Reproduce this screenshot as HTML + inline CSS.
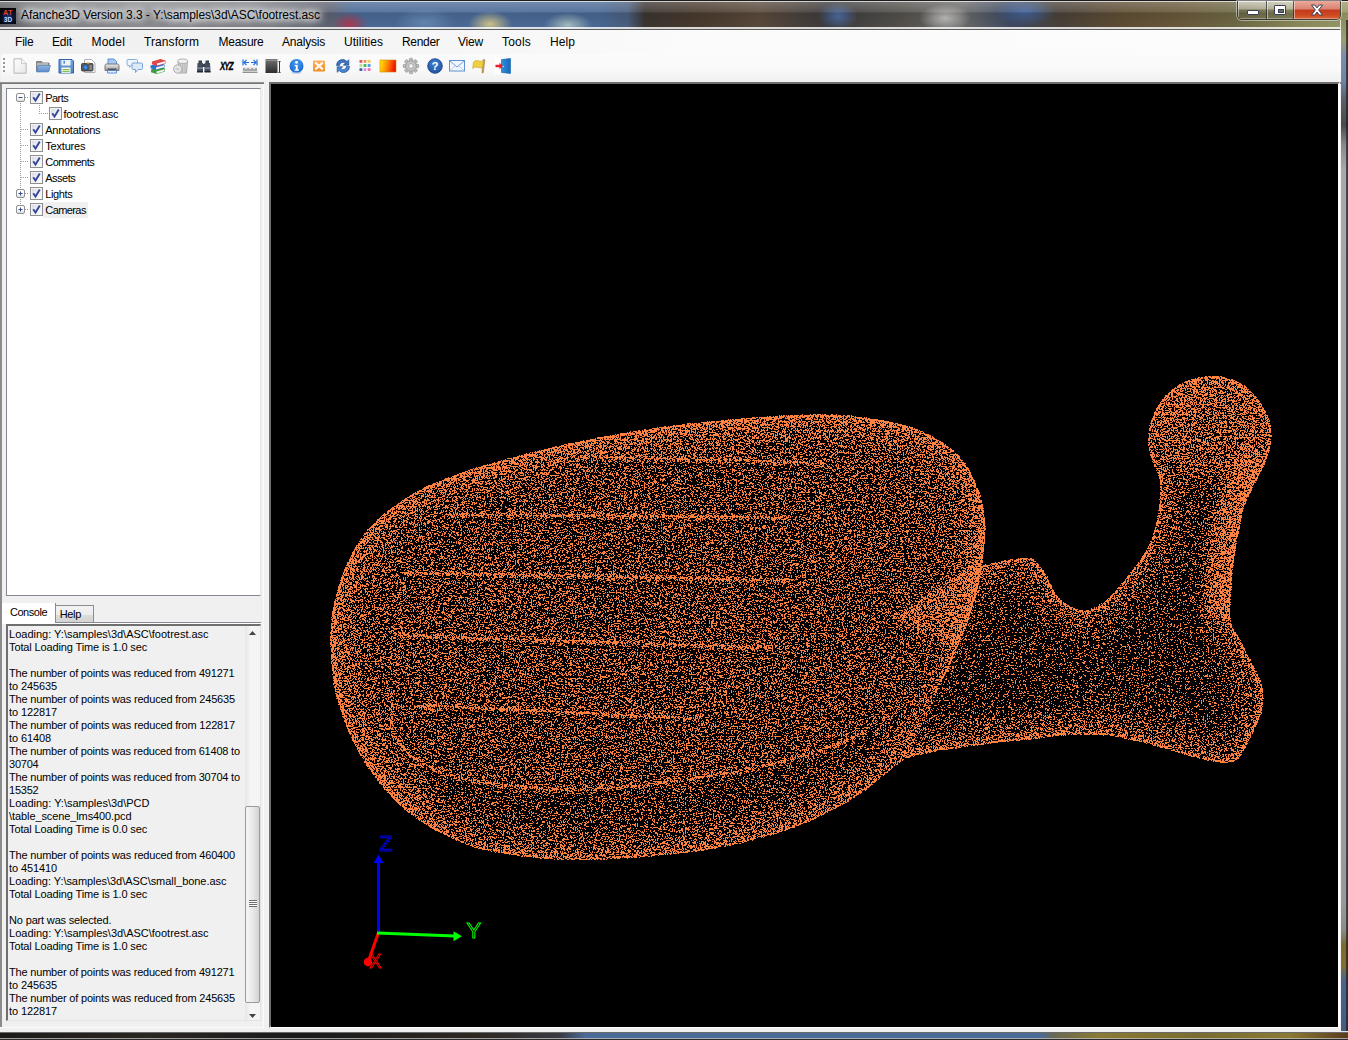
<!DOCTYPE html>
<html lang="en">
<head>
<meta charset="utf-8">
<title>Afanche3D Version 3.3</title>
<style>
*{box-sizing:border-box;margin:0;padding:0}
html,body{width:1348px;height:1040px;overflow:hidden;background:#000}
body{font-family:"Liberation Sans",sans-serif;color:#000}
#win{position:absolute;left:0;top:0;width:1348px;height:1040px;overflow:hidden;background:#6b6d70}
.abs{position:absolute}
#glass{left:0;top:0;width:1348px;height:30px;
 background:
 radial-gradient(ellipse 18px 12px at 350px 24px,rgba(190,50,70,.85),rgba(190,50,70,0) 100%),
 radial-gradient(ellipse 30px 14px at 425px 22px,rgba(120,160,200,.6),rgba(120,160,200,0) 100%),
 radial-gradient(ellipse 22px 13px at 490px 24px,rgba(235,215,140,.85),rgba(235,215,140,0) 100%),
 radial-gradient(ellipse 24px 12px at 568px 25px,rgba(200,220,210,.75),rgba(200,220,210,0) 100%),
 radial-gradient(ellipse 20px 14px at 838px 16px,rgba(80,120,190,.8),rgba(80,120,190,0) 100%),
 radial-gradient(ellipse 26px 14px at 945px 18px,rgba(215,215,215,.8),rgba(215,215,215,0) 100%),
 radial-gradient(ellipse 30px 14px at 1025px 12px,rgba(70,110,180,.75),rgba(70,110,180,0) 100%),
 linear-gradient(90deg,#5d5f63 0,#7b7d81 40px,#8b8d91 150px,#7d7f85 260px,#6c707a 300px,#5f6372 330px,#4b6a97 352px,#4c6b98 470px,#4a6995 600px,#4b5f7f 628px,#3b3531 645px,#4a3b2e 700px,#5a4a3c 760px,#3c3a3c 830px,#54514c 900px,#6d6c6a 960px,#3e4a63 1010px,#4a4238 1060px,#5f4e35 1120px,#6a5a3c 1180px,#6f6a45 1235px,#8d8c5c 1300px,#9a9a6a 1348px)}
#glassshade{left:0;top:0;width:1348px;height:30px;
 background:linear-gradient(180deg,#1d1d1d 0,#1d1d1d 1px,rgba(255,255,255,.75) 1px,rgba(255,255,255,.75) 2px,rgba(255,255,255,.22) 2px,rgba(255,255,255,.08) 12px,rgba(0,0,0,.10) 13px,rgba(0,0,0,.02) 27px,rgba(255,255,255,.8) 27.5px,rgba(255,255,255,.8) 28.7px,#5c5c5c 28.7px,#5c5c5c 30px)}
#appicon{left:0;top:8px;width:16px;height:16px;background:radial-gradient(circle at 50% 60%,#1b3f8a 0,#08122e 45%,#000 80%);overflow:hidden}
#appicon span{position:absolute;left:0;width:16px;text-align:center;font-weight:bold;font-size:7px;line-height:7px}
#appicon .a1{top:1px;color:#e8401c;letter-spacing:.5px}
#appicon .a2{top:8px;color:#c8d8ff;font-size:6.5px}
#title{left:21px;top:8px;font-size:12px;line-height:15px;white-space:nowrap;color:#000;letter-spacing:-0.055px;
 text-shadow:0 0 6px #fff,0 0 8px #fff,0 0 10px #fff,0 0 12px rgba(255,255,255,.9)}
#capbtns{left:1237px;top:1px;width:104px;height:19px;border:1px solid rgba(40,40,40,.75);border-top:none;border-radius:0 0 5px 5px;box-shadow:0 0 0 1px rgba(255,255,255,.45);overflow:hidden;display:flex}
.cb{height:18px;position:relative;border-right:1px solid rgba(40,40,40,.7);box-shadow:inset 1px 0 0 rgba(255,255,255,.45),inset 0 -1px 0 rgba(255,255,255,.3)}
.cmin{width:29px;background:linear-gradient(180deg,rgba(255,255,255,.55) 0,rgba(255,255,255,.3) 45%,rgba(60,60,50,.25) 50%,rgba(120,120,100,.2) 100%)}
.cmax{width:27px;background:linear-gradient(180deg,rgba(255,255,255,.55) 0,rgba(255,255,255,.3) 45%,rgba(60,60,50,.25) 50%,rgba(120,120,100,.2) 100%)}
.cclose{width:46px;border-right:none;background:linear-gradient(180deg,#e9a99b 0,#d98370 45%,#c4391c 50%,#cf4a22 80%,#d9683c 100%)}
.cmin i{position:absolute;left:9px;top:9px;width:12px;height:5px;background:#fff;border:1px solid #3a3f55;border-radius:1px}
.cmax i{position:absolute;left:7px;top:4px;width:12px;height:10px;border:1px solid #3a3f55;background:#fff;border-radius:1px;box-shadow:inset 0 0 0 3px #fff}
.cmax i:after{content:"";position:absolute;left:3px;top:3px;width:4px;height:2px;background:#6b6f60;border:1px solid #3a3f55}
.cclose svg{position:absolute;left:16px;top:3px}
#frameR{left:1340px;top:20px;width:8px;height:1020px;background:linear-gradient(90deg,rgba(255,255,255,.75) 0,rgba(255,255,255,.75) 1.5px,rgba(255,255,255,0) 1.5px,rgba(255,255,255,0) 6px,rgba(30,30,30,.7) 6.5px,rgba(30,30,30,.8) 8px),linear-gradient(180deg,#8b8d62 0,#9c9e74 20px,#7f8ea8 35px,#6f86a8 60px,#5a5f68 80px,#4a4a4c 105px,#8a8a8c 125px,#a9a9ab 150px,#a2a2a4 500px,#9a9a9c 880px,#8c8c8c 910px,#7a6a30 925px,#83702e 945px,#4c648c 960px,#43597f 1020px)}
#frameB{left:0;top:1031px;width:1348px;height:9px;background:linear-gradient(180deg,#e2e2e2 0,#e2e2e2 1px,#6a6a6a 1px,#6a6a6a 2px,rgba(0,0,0,0) 2px,rgba(0,0,0,0) 7px,rgba(190,190,190,.8) 7px,rgba(190,190,190,.8) 8px,#2a2a2a 8px),linear-gradient(90deg,#1c1a18 0,#2a2622 150px,#1a1a1c 300px,#2e2820 480px,#3a3a44 560px,#4a6a97 585px,#4b6b98 1040px,#6a6a50 1055px,#8a7a34 1100px,#7a6c30 1200px,#8a7a34 1290px,#5a3a1a 1348px)}
#client{left:0;top:30px;width:1341px;height:1002px;background:#f0f0f0}
#menubar{left:0;top:30px;width:1341px;height:24px;background:linear-gradient(90deg,#f0f0f0 0,#f3f3f3 300px,#fbfbfb 700px,#fcfcfc 1341px)}
.mi{position:absolute;top:35px;font-size:12px;line-height:14px;white-space:nowrap;color:#000}
#toolbar{left:1px;top:54px;width:1340px;height:28px;border-radius:3px 0 0 0;
 background:linear-gradient(180deg,#fbfbfb 0,#f9f9f9 55%,#f0f0f0 100%)}
#tbline{left:0;top:82px;width:1341px;height:2px;background:linear-gradient(180deg,#a0a0a0,#696969)}
.ic{position:absolute;top:58px;width:16px;height:16px;overflow:visible}
#tree{left:6px;top:88px;width:255px;height:508px;background:#fff;border:1px solid #828790;border-right-color:#e4e6ea}
.dv{position:absolute;width:1px;background:repeating-linear-gradient(180deg,#9a9a9a 0,#9a9a9a 1px,transparent 1px,transparent 2px)}
.dh{position:absolute;height:1px;background:repeating-linear-gradient(90deg,#9a9a9a 0,#9a9a9a 1px,transparent 1px,transparent 2px)}
.chk{position:absolute;width:13px;height:13px;border:1px solid #8e8f8f;background:linear-gradient(135deg,#d5d9e2 0,#eef0f4 50%,#fff 100%);box-shadow:inset 0 0 0 1px #f4f4f4}
.chk svg{position:absolute;left:0;top:0}
.exp{position:absolute;width:9px;height:9px;border:1px solid #919191;border-radius:2px;background:linear-gradient(180deg,#fff 0,#fff 50%,#dcdcdc 100%)}
.exp svg{position:absolute;left:0;top:0}
.tt{position:absolute;font-size:11px;line-height:16px;height:16px;white-space:nowrap;color:#000}
.tt.sel{background:#f0f0f0;padding:0 2.500px 0 2px}
#tabsel{left:2px;top:603px;width:54px;height:21px;background:#fff;border-right:1px solid #8c8e94}
#tabhelp{left:55px;top:604.500px;width:39px;height:18px;border:1px solid #898c95;border-bottom:none;background:linear-gradient(180deg,#f3f3f3 0,#ececec 50%,#dddddd 50%,#d2d2d2 100%)}
#tabline{left:55px;top:622px;width:206px;height:2px;background:linear-gradient(180deg,#898c95 0,#898c95 1px,#fff 1px)}
.tabt{position:absolute;font-size:11px;line-height:14px;white-space:nowrap}
#console{left:6px;top:624px;width:255px;height:397px;background:#f0f0f0;border:2px solid #6f6f6f;border-right:1px solid #e3e3e3;border-bottom:1px solid #e3e3e3;overflow:hidden}
.cl{position:absolute;left:1.100px;font-size:11px;line-height:13px;height:13px;white-space:pre;color:#000}
#sb{position:absolute;left:237px;top:0;width:15px;height:394px;background:linear-gradient(90deg,#e6e6e6,#f6f6f6 40%,#f4f4f4)}
#thumb{position:absolute;left:0;top:180px;width:15px;height:197px;border:1px solid #9a9a9a;border-radius:2px;background:linear-gradient(90deg,#f6f6f6 0,#e9e9e9 50%,#d4d4d4 100%)}
#thumb i{position:absolute;left:3px;top:93px;width:8px;height:7px;background:repeating-linear-gradient(180deg,#6d6d6d 0,#6d6d6d 1px,#fff 1px,#fff 2px)}
.sa{position:absolute;left:4px;width:7px;height:4px;line-height:0}

</style>
</head>
<body>
<div id="win">
 <div id="glass" class="abs"></div>
 <div id="glassshade" class="abs"></div>
 <div id="appicon" class="abs"><span class="a1">AT</span><span class="a2">3D</span></div>
 <div id="title" class="abs">Afanche3D Version 3.3 - Y:\samples\3d\ASC\footrest.asc</div>
 <div id="capbtns" class="abs"><div class="cb cmin"><i></i></div><div class="cb cmax"><i></i></div><div class="cb cclose"><svg width="14" height="12" viewBox="0 0 14 12"><path d="M1.5 1h3.2L7 3.9 9.3 1h3.2L8.7 6l3.8 5H9.3L7 8.1 4.7 11H1.5l3.8-5z" fill="#fff" stroke="#3a3f55" stroke-width="1"/></svg></div></div>
 <div id="frameR" class="abs"></div>
 <div id="frameB" class="abs"></div>
 <div id="client" class="abs"></div>
 <div id="menubar" class="abs"></div>
 <div id="toolbar" class="abs"></div>
 <div id="tbline" class="abs"></div>
<div class="mi" style="left:15px;letter-spacing:-0.20px">File</div>
<div class="mi" style="left:52px;letter-spacing:-0.17px">Edit</div>
<div class="mi" style="left:91.5px;letter-spacing:0.16px">Model</div>
<div class="mi" style="left:144px;letter-spacing:0.09px">Transform</div>
<div class="mi" style="left:218.5px;letter-spacing:-0.24px">Measure</div>
<div class="mi" style="left:282px;letter-spacing:-0.21px">Analysis</div>
<div class="mi" style="left:344px;letter-spacing:0.03px">Utilities</div>
<div class="mi" style="left:402px;letter-spacing:-0.32px">Render</div>
<div class="mi" style="left:458px;letter-spacing:-0.20px">View</div>
<div class="mi" style="left:502px;letter-spacing:0.20px">Tools</div>
<div class="mi" style="left:550px;letter-spacing:0.08px">Help</div>
<div class="abs" style="left:3px;top:58px;width:2px;height:14px;background:repeating-linear-gradient(180deg,#9a9a9a 0,#9a9a9a 2px,transparent 2px,transparent 4px)"></div>
<svg width="0" height="0" style="position:absolute"><defs><linearGradient id="gpage" x1="0" y1="0" x2="1" y2="1"><stop offset="0" stop-color="#fff"/><stop offset="1" stop-color="#e6e6e6"/></linearGradient><linearGradient id="gblue" x1="0" y1="0" x2="0" y2="1"><stop offset="0" stop-color="#7aa7e0"/><stop offset="1" stop-color="#4f7fc4"/></linearGradient><linearGradient id="gfold" x1="0" y1="0" x2="0" y2="1"><stop offset="0" stop-color="#8fb4e2"/><stop offset="1" stop-color="#5c8ccc"/></linearGradient><linearGradient id="ggray" x1="0" y1="0" x2="0" y2="1"><stop offset="0" stop-color="#ededed"/><stop offset="1" stop-color="#9a9a9a"/></linearGradient><linearGradient id="gdark" x1="0" y1="0" x2="0" y2="1"><stop offset="0" stop-color="#6a6a6a"/><stop offset="1" stop-color="#2c2c2c"/></linearGradient><radialGradient id="ginfo" cx="0.5" cy="0.3" r="0.8"><stop offset="0" stop-color="#4a9cf0"/><stop offset="1" stop-color="#0f5fc8"/></radialGradient><radialGradient id="ghelp" cx="0.5" cy="0.3" r="0.8"><stop offset="0" stop-color="#3f7fd0"/><stop offset="1" stop-color="#1c4f9c"/></radialGradient><linearGradient id="gyr" x1="0" y1="0" x2="1" y2="0.15"><stop offset="0" stop-color="#ffee00"/><stop offset="0.5" stop-color="#ff8800"/><stop offset="1" stop-color="#ee1100"/></linearGradient><linearGradient id="gor" x1="0" y1="0" x2="0" y2="1"><stop offset="0" stop-color="#ffb060"/><stop offset="1" stop-color="#f58a1c"/></linearGradient><linearGradient id="gdoor" x1="0" y1="0" x2="1" y2="0"><stop offset="0" stop-color="#2f8fdc"/><stop offset="1" stop-color="#1668b8"/></linearGradient></defs></svg>
<svg class="ic" style="left:12px;top:58px" width="16" height="16" viewBox="0 0 16 16" ><path d="M2 .8h7.500l4.700 4.700v9.700h-12.200z" fill="url(#gpage)" stroke="#b0b0b0" stroke-width=".9" stroke-linejoin="round"/><path d="M9.500 .8v4.700h4.700" fill="#f6f6f6" stroke="#c2c2c2" stroke-width=".8"/></svg>
<svg class="ic" style="left:35px;top:58px" width="16" height="16" viewBox="0 0 16 16" ><path d="M1.5 3.5h5l1 1.5h6.5v8h-12.5z" fill="#8d8d8d" stroke="#6e6e6e" stroke-width=".8"/><path d="M2 5h11v3h-11z" fill="#b5b5b5"/><path d="M3.2 7.5h12.3l-2 6.5h-12z" fill="url(#gfold)" stroke="#4f7db8" stroke-width=".6"/></svg>
<svg class="ic" style="left:58px;top:58px" width="16" height="16" viewBox="0 0 16 16" ><path d="M1 1.5h13l1.5 1.5v12h-14.5z" fill="url(#gblue)" stroke="#2f62b0" stroke-width="1"/><rect x="3.5" y="2" width="9" height="5.5" fill="#eef3fb"/><rect x="5.5" y="2.7" width="1.3" height="3" fill="#3c6dbc"/><rect x="3.5" y="9.5" width="9" height="5.5" fill="#f5f7f2"/><rect x="4.5" y="11" width="7" height="1.2" fill="#7fc04a"/><rect x="4.5" y="13" width="7" height="1.2" fill="#7fc04a"/></svg>
<svg class="ic" style="left:80.5px;top:58px" width="16" height="16" viewBox="0 0 16 16" ><path d="M3.5 1.5h7l3.5 3.5v9.5h-10.5z" fill="#fff" stroke="#b0b0b0"/><rect x="0.5" y="5.5" width="11.5" height="7.5" rx="1" fill="#5a5a5a" stroke="#333" stroke-width=".8"/><rect x="6" y="4.2" width="2.4" height="1.6" fill="#e8a23a"/><circle cx="4.5" cy="9.3" r="2.4" fill="#3b8be8" stroke="#1d4f9a" stroke-width=".7"/><rect x="8.5" y="7" width="2.6" height="5" fill="#888"/></svg>
<svg class="ic" style="left:104px;top:58px" width="16" height="16" viewBox="0 0 16 16" ><path d="M4 1h6l2.5 2.5v5h-8.5z" fill="#a9c8f0" stroke="#4a86d6" stroke-width=".9"/><path d="M1 7.5c0-1 .8-1.5 1.5-1.5h11c.7 0 1.5.5 1.5 1.5v5h-14z" fill="url(#ggray)" stroke="#6d6d6d" stroke-width=".9"/><rect x="3.5" y="10.5" width="9" height="2" fill="#555"/><path d="M3.5 12.5h9v2.5h-9z" fill="#e6f0fc" stroke="#4a86d6" stroke-width=".9"/></svg>
<svg class="ic" style="left:127px;top:58px" width="16" height="16" viewBox="0 0 16 16" ><path d="M1 1.5h8.5c.6 0 1 .4 1 1v4c0 .6-.4 1-1 1h-5.5l-1.500 2v-2h-1.500c-.6 0-1-.4-1-1v-4c0-.6.400-1 1-1z" fill="#eef5fd" stroke="#7fa8dc" stroke-width=".9"/><path d="M6 5h8.500c.6 0 1 .4 1 1v4.500c0 .6-.4 1-1 1h-3.500l-2.500 3v-3h-2.500c-.6 0-1-.4-1-1v-4.500c0-.6.400-1 1-1z" fill="#dce9f9" stroke="#6f9ad4" stroke-width=".9"/></svg>
<svg class="ic" style="left:150px;top:58px" width="16" height="16" viewBox="0 0 16 16" ><path d="M1 11.5l8.500-2.500 5.500 1.500v3l-8.500 2.500-5.500-1.800z" fill="#3c9e3c"/><path d="M6.500 13.500l8-2.300v2l-8 2.400z" fill="#f4f4f4"/><path d="M0.500 7.500l8.500-2.500 5.500 1.500v3l-8.500 2.500-5.500-1.800z" fill="#2f6fd0"/><path d="M6 9.500l8-2.300v2l-8 2.400z" fill="#f4f4f4"/><path d="M2 3.500l8.500-2.500 5 1.500v3l-8.500 2.500-5-1.800z" fill="#e04848"/><path d="M7 5.500l8-2.300v2l-8 2.400z" fill="#f4f4f4"/></svg>
<svg class="ic" style="left:173px;top:58px" width="16" height="16" viewBox="0 0 16 16" ><path d="M5 3.500h9.500l-1 11.500h-7.500z" fill="#d8d8d8" stroke="#9a9a9a" stroke-width=".8"/><ellipse cx="9.700" cy="3.200" rx="5" ry="2.200" fill="#f2f2f2" stroke="#9c9c9c" stroke-width=".8"/><path d="M7.500 6v8M9.800 6v8M12 6v8" stroke="#a8a8a8" stroke-width=".8"/><circle cx="4.800" cy="11" r="4.200" fill="#e4e4e4" stroke="#9a9a9a" stroke-width=".8"/><path d="M3 10.500l3 1" stroke="#aaa" stroke-width=".8"/></svg>
<svg class="ic" style="left:196px;top:58px" width="16" height="16" viewBox="0 0 16 16" ><path d="M2.500 2.500h3.500v2.500h-3.500zM9.500 2.500h3.500v2.500h-3.500z" fill="#39414f"/><path d="M1.500 5h5.500v9h-6zM8.500 5h5.500l.5 9h-6z" fill="#434c5c"/><rect x="6.500" y="6" width="2.500" height="3" fill="#39414f"/><rect x="1" y="9.500" width="6" height="1.300" fill="#8794a8"/><rect x="8.500" y="9.500" width="6" height="1.300" fill="#8794a8"/><rect x="1" y="13" width="6" height="1.500" fill="#20252e"/><rect x="8.500" y="13" width="6" height="1.500" fill="#20252e"/></svg>
<div class="abs" style="left:219.500px;top:60.300px;width:20px;height:12px;font:italic bold 10.500px/12px 'Liberation Sans',sans-serif;letter-spacing:-1.200px;color:#000;-webkit-text-stroke:.35px #000;transform:scaleX(.75);transform-origin:0 0;white-space:nowrap">XYZ</div>
<svg class="ic" style="left:241.5px;top:58px" width="16" height="16" viewBox="0 0 16 16" ><path d="M1 1.500v6M15 1.500v6" stroke="#1f6fe0" stroke-width="1.200"/><path d="M2 4.500h5M9 4.500h5" stroke="#1f6fe0" stroke-width="1.100"/><path d="M4.500 2l-2.700 2.500 2.700 2.500M11.500 2l2.700 2.500-2.700 2.500" fill="none" stroke="#1f6fe0" stroke-width="1.100"/><rect x="0.500" y="9" width="15" height="5" fill="#e9e9e9"/><path d="M2 10v3M4 11v2M6 10v3M8 11v2M10 10v3M12 11v2M14 10v3" stroke="#555" stroke-width=".9"/><path d="M0.500 14.300h15" stroke="#777" stroke-width="1"/></svg>
<svg class="ic" style="left:265px;top:58px" width="16" height="16" viewBox="0 0 16 16" ><rect x="0.500" y="1" width="12" height="1.600" fill="#777"/><rect x="0.500" y="2.600" width="12" height="12.400" fill="url(#gdark)"/><path d="M14.500 3.500v11" stroke="#333" stroke-width="1"/><path d="M13.300 3.500h2.400M13.300 14.500h2.400" stroke="#333" stroke-width=".8"/></svg>
<svg class="ic" style="left:288.5px;top:58px" width="16" height="16" viewBox="0 0 16 16" ><circle cx="7.500" cy="8" r="7" fill="url(#ginfo)"/><ellipse cx="7.500" cy="14.800" rx="5" ry="1" fill="#9ab8e0" opacity=".6"/><circle cx="7.500" cy="4.300" r="1.400" fill="#fff"/><path d="M5.700 7h3v4.500h1.200v1.300h-4.400v-1.300h1.300v-3.200h-1.100z" fill="#fff"/></svg>
<svg class="ic" style="left:313px;top:58px" width="16" height="16" viewBox="0 0 16 16" ><rect x="0" y="2.500" width="12" height="11" rx="1" fill="url(#gor)"/><path d="M3 5.200l6 5.600M9 5.200l-6 5.600" stroke="#fff" stroke-width="2.200" stroke-linecap="square"/></svg>
<svg class="ic" style="left:334.5px;top:58px" width="16" height="16" viewBox="0 0 16 16" ><path d="M1.500 7.500a6 6 0 0 1 10.500-4l1.800-1.800v5.500h-5.500l1.900-1.900a3.400 3.400 0 0 0-5.700 2.200z" fill="#3c74c0" stroke="#1f4f96" stroke-width=".7"/><path d="M14.500 8.500a6 6 0 0 1-10.500 4l-1.800 1.800v-5.500h5.500l-1.900 1.900a3.400 3.400 0 0 0 5.700-2.200z" fill="#4a86d0" stroke="#1f4f96" stroke-width=".7"/></svg>
<svg class="ic" style="left:358.5px;top:58px" width="16" height="16" viewBox="0 0 16 16" ><rect x="0.5" y="2" width="2.800" height="2.800" fill="#e8505a"/><rect x="4.6" y="2" width="2.800" height="2.800" fill="#f09a3c"/><rect x="8.7" y="2" width="2.800" height="2.800" fill="#f0cc50"/><rect x="0.5" y="6.1" width="2.800" height="2.800" fill="#b8dc90"/><rect x="4.6" y="6.1" width="2.800" height="2.800" fill="#3cb85a"/><rect x="8.7" y="6.1" width="2.800" height="2.800" fill="#4a9ae8"/><rect x="0.5" y="10.2" width="2.800" height="2.800" fill="#4060a8"/><rect x="4.6" y="10.2" width="2.800" height="2.800" fill="#d890e0"/><rect x="8.7" y="10.2" width="2.800" height="2.800" fill="#f070a8"/></svg>
<svg class="ic" style="left:380px;top:58px" width="16" height="16" viewBox="0 0 16 16" ><rect x="0" y="2" width="16" height="12" fill="url(#gyr)" stroke="#d08a10" stroke-width=".6"/></svg>
<svg class="ic" style="left:403px;top:58px" width="16" height="16" viewBox="0 0 16 16" ><g transform="translate(8,8)"><rect x="-1.700" y="-7.800" width="3.400" height="4" rx=".8" fill="#b9b9b9" stroke="#8c8c8c" stroke-width=".5" transform="rotate(0)"/><rect x="-1.700" y="-7.800" width="3.400" height="4" rx=".8" fill="#b9b9b9" stroke="#8c8c8c" stroke-width=".5" transform="rotate(45)"/><rect x="-1.700" y="-7.800" width="3.400" height="4" rx=".8" fill="#b9b9b9" stroke="#8c8c8c" stroke-width=".5" transform="rotate(90)"/><rect x="-1.700" y="-7.800" width="3.400" height="4" rx=".8" fill="#b9b9b9" stroke="#8c8c8c" stroke-width=".5" transform="rotate(135)"/><rect x="-1.700" y="-7.800" width="3.400" height="4" rx=".8" fill="#b9b9b9" stroke="#8c8c8c" stroke-width=".5" transform="rotate(180)"/><rect x="-1.700" y="-7.800" width="3.400" height="4" rx=".8" fill="#b9b9b9" stroke="#8c8c8c" stroke-width=".5" transform="rotate(225)"/><rect x="-1.700" y="-7.800" width="3.400" height="4" rx=".8" fill="#b9b9b9" stroke="#8c8c8c" stroke-width=".5" transform="rotate(270)"/><rect x="-1.700" y="-7.800" width="3.400" height="4" rx=".8" fill="#b9b9b9" stroke="#8c8c8c" stroke-width=".5" transform="rotate(315)"/><circle r="5.300" fill="#c4c4c4" stroke="#8c8c8c" stroke-width=".6"/><circle r="2.300" fill="#f6f6f6" stroke="#8c8c8c" stroke-width=".6"/></g></svg>
<svg class="ic" style="left:426.5px;top:58px" width="16" height="16" viewBox="0 0 16 16" ><circle cx="8" cy="8" r="7.300" fill="url(#ghelp)" stroke="#173f80" stroke-width=".8"/><text x="8" y="12.200" text-anchor="middle" font-family="Liberation Sans, sans-serif" font-weight="bold" font-size="11.500" fill="#fff">?</text></svg>
<svg class="ic" style="left:449px;top:58px" width="16" height="16" viewBox="0 0 16 16" ><rect x="0.500" y="2.500" width="15" height="10.500" fill="#f2f7fd" stroke="#5f90d0" stroke-width="1"/><path d="M1 3l7 6 7-6" fill="none" stroke="#6fa0dc" stroke-width="1"/><path d="M1 12.500l5-4.500M15 12.500l-5-4.500" stroke="#a8c6ea" stroke-width=".8"/></svg>
<svg class="ic" style="left:472px;top:58px" width="16" height="16" viewBox="0 0 16 16" ><path d="M11.500 1.500c.8-.3 1.500.2 1.300 1l-1.500 12c-.1.800-1.300.8-1.300 0l.8-12z" fill="#c89a58" stroke="#9a7030" stroke-width=".5"/><path d="M1.500 4c2-2 4-1.500 5.500-1s3 .5 4.500-.5l-.8 6.500c-1.500 1-3 1-4.500.5s-3.500-1-5.500 1z" fill="#f0d040" stroke="#c8a018" stroke-width=".6"/></svg>
<svg class="ic" style="left:495px;top:58px" width="16" height="16" viewBox="0 0 16 16" ><rect x="0" y="0" width="16" height="16" fill="#fff"/><path d="M6.500 1.500l9-1v15l-9-1z" fill="url(#gdoor)" stroke="#0f5aa8" stroke-width=".6"/><path d="M0.500 6.800h4v-2l3.500 3.200-3.500 3.200v-2h-4z" fill="#e8202a"/><circle cx="8.300" cy="8.500" r=".7" fill="#cfe4f8"/></svg>
<div class="abs" style="left:0;top:84px;width:2px;height:944px;background:#8b8b8b"></div>
<div class="abs" style="left:263px;top:84px;width:1px;height:944px;background:#fbfbfb"></div>
<div class="abs" style="left:0;top:1027px;width:264px;height:1px;background:#fcfcfc"></div>
<div class="abs" style="left:269px;top:82px;width:1071px;height:946px;border:2px solid #6e6e6e;border-right-color:#fff;border-bottom-color:#fff;background:#000"></div>
<div class="abs" style="left:264px;top:82px;width:5px;height:2px;background:#f0f0f0"></div>
<div id="tree" class="abs"></div>
<div class="dv" style="left:20px;top:103px;height:107px"></div>
<div class="dv" style="left:39px;top:105px;height:9px"></div>
<div class="dh" style="left:39px;top:113px;width:9px"></div>
<div class="dh" style="left:25px;top:97px;width:4px"></div>
<div class="exp" style="left:16px;top:93px"><svg width="7" height="7" viewBox="0 0 7 7"><path d="M1.500 3.500h4" stroke="#35479a" stroke-width="1"/></svg></div>
<div class="chk" style="left:30px;top:91px"><svg width="11" height="11" viewBox="0 0 11 11"><path d="M2.200 5.200l2.300 3.300 4.300-7" fill="none" stroke="#35479a" stroke-width="1.900"/></svg></div>
<div class="tt" style="left:45.3px;top:89.5px;letter-spacing:-0.577px">Parts</div>
<div class="chk" style="left:49px;top:107px"><svg width="11" height="11" viewBox="0 0 11 11"><path d="M2.200 5.200l2.300 3.300 4.300-7" fill="none" stroke="#35479a" stroke-width="1.900"/></svg></div>
<div class="tt" style="left:63.4px;top:105.5px;letter-spacing:-0.155px">footrest.asc</div>
<div class="dh" style="left:21px;top:129px;width:8px"></div>
<div class="chk" style="left:30px;top:123px"><svg width="11" height="11" viewBox="0 0 11 11"><path d="M2.200 5.200l2.300 3.300 4.300-7" fill="none" stroke="#35479a" stroke-width="1.900"/></svg></div>
<div class="tt" style="left:45.3px;top:121.5px;letter-spacing:-0.283px">Annotations</div>
<div class="dh" style="left:21px;top:145px;width:8px"></div>
<div class="chk" style="left:30px;top:139px"><svg width="11" height="11" viewBox="0 0 11 11"><path d="M2.200 5.200l2.300 3.300 4.300-7" fill="none" stroke="#35479a" stroke-width="1.900"/></svg></div>
<div class="tt" style="left:45.3px;top:137.5px;letter-spacing:-0.210px">Textures</div>
<div class="dh" style="left:21px;top:161px;width:8px"></div>
<div class="chk" style="left:30px;top:155px"><svg width="11" height="11" viewBox="0 0 11 11"><path d="M2.200 5.200l2.300 3.300 4.300-7" fill="none" stroke="#35479a" stroke-width="1.900"/></svg></div>
<div class="tt" style="left:45.3px;top:153.5px;letter-spacing:-0.548px">Comments</div>
<div class="dh" style="left:21px;top:177px;width:8px"></div>
<div class="chk" style="left:30px;top:171px"><svg width="11" height="11" viewBox="0 0 11 11"><path d="M2.200 5.200l2.300 3.300 4.300-7" fill="none" stroke="#35479a" stroke-width="1.900"/></svg></div>
<div class="tt" style="left:45.3px;top:169.5px;letter-spacing:-0.519px">Assets</div>
<div class="dh" style="left:25px;top:193px;width:4px"></div>
<div class="exp" style="left:16px;top:189px"><svg width="7" height="7" viewBox="0 0 7 7"><path d="M1.500 3.500h4M3.500 1.500v4" stroke="#35479a" stroke-width="1"/></svg></div>
<div class="chk" style="left:30px;top:187px"><svg width="11" height="11" viewBox="0 0 11 11"><path d="M2.200 5.200l2.300 3.300 4.300-7" fill="none" stroke="#35479a" stroke-width="1.900"/></svg></div>
<div class="tt" style="left:45.3px;top:185.5px;letter-spacing:-0.393px">Lights</div>
<div class="dh" style="left:25px;top:209px;width:4px"></div>
<div class="exp" style="left:16px;top:205px"><svg width="7" height="7" viewBox="0 0 7 7"><path d="M1.500 3.500h4M3.500 1.500v4" stroke="#35479a" stroke-width="1"/></svg></div>
<div class="chk" style="left:30px;top:203px"><svg width="11" height="11" viewBox="0 0 11 11"><path d="M2.200 5.200l2.300 3.300 4.300-7" fill="none" stroke="#35479a" stroke-width="1.900"/></svg></div>
<div class="tt sel" style="left:43.3px;top:201.5px;letter-spacing:-0.589px">Cameras</div>
<div id="tabsel" class="abs"></div><div id="tabhelp" class="abs"></div><div id="tabline" class="abs"></div>
<div class="tabt" style="left:9.900px;top:605px;letter-spacing:-0.443px">Console</div>
<div class="tabt" style="left:59.700px;top:607px;letter-spacing:-0.325px">Help</div>
<div id="console" class="abs">
<div class="cl" style="top:1.5px;letter-spacing:-0.006px">Loading: Y:\samples\3d\ASC\footrest.asc</div>
<div class="cl" style="top:14.5px;letter-spacing:-0.133px">Total Loading Time is 1.0 sec</div>
<div class="cl" style="top:40.5px;letter-spacing:-0.202px">The number of points was reduced from 491271</div>
<div class="cl" style="top:53.5px;letter-spacing:-0.115px">to 245635</div>
<div class="cl" style="top:66.5px;letter-spacing:-0.191px">The number of points was reduced from 245635</div>
<div class="cl" style="top:79.5px;letter-spacing:-0.115px">to 122817</div>
<div class="cl" style="top:92.5px;letter-spacing:-0.191px">The number of points was reduced from 122817</div>
<div class="cl" style="top:105.5px;letter-spacing:-0.116px">to 61408</div>
<div class="cl" style="top:118.5px;letter-spacing:-0.207px">The number of points was reduced from 61408 to</div>
<div class="cl" style="top:131.5px;letter-spacing:-0.239px">30704</div>
<div class="cl" style="top:144.5px;letter-spacing:-0.207px">The number of points was reduced from 30704 to</div>
<div class="cl" style="top:157.5px;letter-spacing:-0.239px">15352</div>
<div class="cl" style="top:170.5px;letter-spacing:-0.002px">Loading: Y:\samples\3d\PCD</div>
<div class="cl" style="top:183.5px;letter-spacing:-0.102px">\table_scene_lms400.pcd</div>
<div class="cl" style="top:196.5px;letter-spacing:-0.133px">Total Loading Time is 0.0 sec</div>
<div class="cl" style="top:222.5px;letter-spacing:-0.191px">The number of points was reduced from 460400</div>
<div class="cl" style="top:235.5px;letter-spacing:-0.115px">to 451410</div>
<div class="cl" style="top:248.5px;letter-spacing:-0.049px">Loading: Y:\samples\3d\ASC\small_bone.asc</div>
<div class="cl" style="top:261.5px;letter-spacing:-0.133px">Total Loading Time is 1.0 sec</div>
<div class="cl" style="top:287.5px;letter-spacing:-0.171px">No part was selected.</div>
<div class="cl" style="top:300.5px;letter-spacing:-0.006px">Loading: Y:\samples\3d\ASC\footrest.asc</div>
<div class="cl" style="top:313.5px;letter-spacing:-0.133px">Total Loading Time is 1.0 sec</div>
<div class="cl" style="top:339.5px;letter-spacing:-0.202px">The number of points was reduced from 491271</div>
<div class="cl" style="top:352.5px;letter-spacing:-0.115px">to 245635</div>
<div class="cl" style="top:365.5px;letter-spacing:-0.191px">The number of points was reduced from 245635</div>
<div class="cl" style="top:378.5px;letter-spacing:-0.115px">to 122817</div>
<div id="sb"><div class="sa" style="top:4px"><svg width="7" height="4" viewBox="0 0 7 4"><path d="M0 4l3.500-4 3.500 4z" fill="#444"/></svg></div><div id="thumb"><i></i></div><div class="sa" style="bottom:3px"><svg width="7" height="4" viewBox="0 0 7 4"><path d="M0 0l3.500 4 3.500-4z" fill="#444"/></svg></div></div>
</div>
<svg class="abs" style="left:271px;top:84px" width="1067" height="943" viewBox="271 84 1067 943">
<defs>
<filter id="pc" x="271" y="84" width="1067" height="943" filterUnits="userSpaceOnUse" color-interpolation-filters="sRGB"><feTurbulence type="fractalNoise" baseFrequency="0.83 0.77" numOctaves="1" seed="7" result="n1"/><feTurbulence type="fractalNoise" baseFrequency="0.61 0.69" numOctaves="1" seed="23" result="n3"/><feTurbulence type="fractalNoise" baseFrequency="0.29 0.33" numOctaves="2" seed="3" result="n2"/><feColorMatrix in="n1" type="matrix" values="0 0 0 0 0  0 0 0 0 0  0 0 0 0 0  1 0 0 0 0" result="a1"/><feColorMatrix in="n3" type="matrix" values="0 0 0 0 0  0 0 0 0 0  0 0 0 0 0  0 0 1 0 0" result="a3"/><feColorMatrix in="n2" type="matrix" values="0 0 0 0 0  0 0 0 0 0  0 0 0 0 0  0 1 0 0 0" result="a2"/><feComposite in="a1" in2="a3" operator="arithmetic" k1="0" k2="0.6" k3="0.5" k4="-0.05" result="a13"/><feComposite in="a13" in2="a2" operator="arithmetic" k1="0" k2="1" k3="0.3" k4="-0.15" result="na"/><feColorMatrix in="SourceGraphic" type="matrix" values="0 0 0 0 0  0 0 0 0 0  0 0 0 0 0  1 0 0 0 0" result="s0"/><feComponentTransfer in="s0" result="sa"><feFuncA type="table" tableValues="0.000 0.344 0.376 0.396 0.413 0.428 0.440 0.450 0.462 0.472 0.482 0.491 0.497 0.505 0.514 0.524 0.533 0.543 0.554 0.565 0.577 0.591 0.607 0.627 0.657 0.788"/></feComponentTransfer><feComposite in="sa" in2="na" operator="arithmetic" k1="0" k2="1" k3="-1" k4="0" result="d"/><feComponentTransfer in="d" result="m"><feFuncA type="linear" slope="2000" intercept="0"/></feComponentTransfer><feFlood flood-color="#ff8242"/><feComposite in2="m" operator="in"/></filter>
<filter id="b2" x="271" y="84" width="1067" height="943" filterUnits="userSpaceOnUse"><feGaussianBlur stdDeviation="2.2"/></filter>
<filter id="b4" x="271" y="84" width="1067" height="943" filterUnits="userSpaceOnUse"><feGaussianBlur stdDeviation="4.5"/></filter>
<filter id="b1" x="271" y="84" width="1067" height="943" filterUnits="userSpaceOnUse"><feGaussianBlur stdDeviation="0.6"/></filter>
<filter id="b1s" x="271" y="84" width="1067" height="943" filterUnits="userSpaceOnUse"><feGaussianBlur stdDeviation="1.2"/></filter>
<filter id="b8" x="271" y="84" width="1067" height="943" filterUnits="userSpaceOnUse"><feGaussianBlur stdDeviation="9"/></filter>
<filter id="b6" x="271" y="84" width="1067" height="943" filterUnits="userSpaceOnUse"><feGaussianBlur stdDeviation="6"/></filter>
<path id="silp" d="M330.5 645.0C330.7 640.8 330.3 629.2 331.5 620.0C332.7 610.8 334.4 600.4 337.5 590.0C340.6 579.6 345.0 567.5 350.0 557.5C355.0 547.5 360.4 538.3 367.5 530.0C374.6 521.7 382.9 514.6 392.5 507.5C402.1 500.4 413.3 493.3 425.0 487.5C436.7 481.7 450.0 476.9 462.5 472.5C475.0 468.1 487.5 464.6 500.0 461.0C512.5 457.4 525.0 454.1 537.5 451.0C550.0 447.9 562.5 445.2 575.0 442.5C587.5 439.8 602.2 436.9 612.5 435.0C622.8 433.1 624.6 432.8 637.0 431.0C649.4 429.2 670.3 426.0 687.0 424.0C703.7 422.0 720.3 420.4 737.0 419.0C753.7 417.6 772.0 416.2 787.0 415.5C802.0 414.8 814.5 414.2 827.0 414.5C839.5 414.8 849.9 415.4 862.0 417.0C874.1 418.6 889.1 421.4 899.5 424.0C909.9 426.6 916.2 428.6 924.5 432.5C932.8 436.4 942.8 442.5 949.5 447.5C956.2 452.5 960.4 457.1 964.5 462.5C968.6 467.9 971.2 473.8 974.0 480.0C976.8 486.2 979.7 492.9 981.5 500.0C983.3 507.1 984.5 515.0 985.0 522.5C985.5 530.0 985.0 537.8 984.5 545.0C984.0 552.2 982.4 562.5 982.0 566.0C983.2 565.7 984.1 565.1 989.0 564.0C993.9 562.9 1004.7 560.4 1011.5 559.5C1018.3 558.6 1025.9 558.2 1030.0 558.5C1034.1 558.8 1035.0 560.6 1036.0 561.0C1037.8 563.3 1043.1 569.3 1046.5 575.0C1049.9 580.7 1051.9 589.4 1056.5 595.0C1061.1 600.6 1068.2 606.2 1074.0 608.5C1079.8 610.8 1085.7 610.8 1091.5 609.0C1097.3 607.2 1102.8 603.2 1109.0 597.5C1115.2 591.8 1122.8 582.9 1129.0 575.0C1135.2 567.1 1141.9 558.8 1146.5 550.0C1151.1 541.2 1154.2 531.7 1156.5 522.5C1158.8 513.3 1159.5 502.5 1160.0 495.0C1160.5 487.5 1160.8 483.3 1159.5 477.5C1158.2 471.7 1153.9 466.2 1152.0 460.0C1150.1 453.8 1148.1 446.7 1148.0 440.0C1147.9 433.3 1148.8 427.1 1151.5 420.0C1154.2 412.9 1158.6 403.8 1164.0 397.5C1169.4 391.2 1176.1 386.1 1184.0 382.5C1191.9 378.9 1202.8 376.2 1211.5 376.0C1220.2 375.8 1229.0 377.4 1236.5 381.0C1244.0 384.6 1251.1 391.0 1256.5 397.5C1261.9 404.0 1266.6 412.5 1269.0 420.0C1271.4 427.5 1271.8 435.0 1271.0 442.5C1270.2 450.0 1266.8 457.9 1264.0 465.0C1261.2 472.1 1257.2 478.3 1254.0 485.0C1250.8 491.7 1247.5 497.5 1245.0 505.0C1242.5 512.5 1240.8 520.8 1239.0 530.0C1237.2 539.2 1235.2 550.8 1234.0 560.0C1232.8 569.2 1232.1 575.0 1231.5 585.0C1230.9 595.0 1229.2 611.2 1230.5 620.0C1231.8 628.8 1235.9 631.2 1239.0 637.5C1242.1 643.8 1245.7 650.8 1249.0 657.5C1252.3 664.2 1256.6 671.2 1259.0 677.5C1261.4 683.8 1263.1 689.2 1263.5 695.0C1263.9 700.8 1263.1 706.7 1261.5 712.5C1259.9 718.3 1256.9 723.8 1254.0 730.0C1251.1 736.2 1246.9 745.0 1244.0 750.0C1241.1 755.0 1239.4 757.8 1236.5 760.0C1233.6 762.2 1230.7 762.8 1226.5 763.0C1222.3 763.2 1218.2 762.3 1211.5 761.0C1204.8 759.7 1194.8 757.2 1186.5 755.0C1178.2 752.8 1169.8 749.8 1161.5 747.5C1153.2 745.2 1144.8 742.9 1136.5 741.0C1128.2 739.1 1119.8 737.1 1111.5 736.0C1103.2 734.9 1094.8 734.6 1086.5 734.5C1078.2 734.4 1071.9 734.6 1061.5 735.5C1051.1 736.4 1034.4 738.8 1024.0 740.0C1013.6 741.2 1007.3 741.5 999.0 742.5C990.7 743.5 984.3 744.6 974.0 746.0C963.7 747.4 948.5 748.9 937.0 751.0C925.5 753.1 910.3 757.2 905.0 758.5C902.0 760.8 894.2 766.8 887.0 772.5C879.8 778.2 870.3 786.7 862.0 792.5C853.7 798.3 845.3 802.9 837.0 807.5C828.7 812.1 820.3 816.2 812.0 820.0C803.7 823.8 795.3 827.1 787.0 830.0C778.7 832.9 770.3 835.2 762.0 837.5C753.7 839.8 745.3 842.1 737.0 844.0C728.7 845.9 720.3 847.6 712.0 849.0C703.7 850.4 695.3 851.5 687.0 852.5C678.7 853.5 670.3 854.2 662.0 855.0C653.7 855.8 649.4 856.7 637.0 857.5C624.6 858.3 602.0 859.8 587.5 860.0C573.0 860.2 562.5 859.8 550.0 859.0C537.5 858.2 525.0 856.9 512.5 855.0C500.0 853.1 486.2 850.8 475.0 847.5C463.8 844.2 455.0 840.0 445.0 835.0C435.0 830.0 424.2 824.2 415.0 817.5C405.8 810.8 397.5 802.9 390.0 795.0C382.5 787.1 375.8 778.3 370.0 770.0C364.2 761.7 359.3 753.3 355.0 745.0C350.7 736.7 347.2 728.3 344.0 720.0C340.8 711.7 338.0 703.3 336.0 695.0C334.0 686.7 332.9 678.3 332.0 670.0C331.1 661.7 330.8 649.2 330.5 645.0Z"/>
<path id="padp" d="M330.5 645.0C330.7 640.8 330.3 629.2 331.5 620.0C332.7 610.8 334.4 600.4 337.5 590.0C340.6 579.6 345.0 567.5 350.0 557.5C355.0 547.5 360.4 538.3 367.5 530.0C374.6 521.7 382.9 514.6 392.5 507.5C402.1 500.4 413.3 493.3 425.0 487.5C436.7 481.7 450.0 476.9 462.5 472.5C475.0 468.1 487.5 464.6 500.0 461.0C512.5 457.4 525.0 454.1 537.5 451.0C550.0 447.9 562.5 445.2 575.0 442.5C587.5 439.8 602.2 436.9 612.5 435.0C622.8 433.1 624.6 432.8 637.0 431.0C649.4 429.2 670.3 426.0 687.0 424.0C703.7 422.0 720.3 420.4 737.0 419.0C753.7 417.6 772.0 416.2 787.0 415.5C802.0 414.8 814.5 414.2 827.0 414.5C839.5 414.8 849.9 415.4 862.0 417.0C874.1 418.6 889.1 421.4 899.5 424.0C909.9 426.6 916.2 428.6 924.5 432.5C932.8 436.4 942.8 442.5 949.5 447.5C956.2 452.5 960.4 457.1 964.5 462.5C968.6 467.9 971.2 473.8 974.0 480.0C976.8 486.2 979.7 492.9 981.5 500.0C983.3 507.1 984.5 515.0 985.0 522.5C985.5 530.0 985.0 537.8 984.5 545.0C984.0 552.2 982.4 562.5 982.0 566.0C981.7 567.9 982.0 569.3 980.0 577.5C978.0 585.7 973.8 603.3 970.0 615.0C966.2 626.7 961.2 638.3 957.5 647.5C953.8 656.7 950.4 663.8 947.5 670.0C944.6 676.2 941.2 682.5 940.0 685.0C937.5 690.8 930.8 707.8 925.0 720.0C919.2 732.2 908.3 752.1 905.0 758.5C902.0 760.8 894.2 766.8 887.0 772.5C879.8 778.2 870.3 786.7 862.0 792.5C853.7 798.3 845.3 802.9 837.0 807.5C828.7 812.1 820.3 816.2 812.0 820.0C803.7 823.8 795.3 827.1 787.0 830.0C778.7 832.9 770.3 835.2 762.0 837.5C753.7 839.8 745.3 842.1 737.0 844.0C728.7 845.9 720.3 847.6 712.0 849.0C703.7 850.4 695.3 851.5 687.0 852.5C678.7 853.5 670.3 854.2 662.0 855.0C653.7 855.8 649.4 856.7 637.0 857.5C624.6 858.3 602.0 859.8 587.5 860.0C573.0 860.2 562.5 859.8 550.0 859.0C537.5 858.2 525.0 856.9 512.5 855.0C500.0 853.1 486.2 850.8 475.0 847.5C463.8 844.2 455.0 840.0 445.0 835.0C435.0 830.0 424.2 824.2 415.0 817.5C405.8 810.8 397.5 802.9 390.0 795.0C382.5 787.1 375.8 778.3 370.0 770.0C364.2 761.7 359.3 753.3 355.0 745.0C350.7 736.7 347.2 728.3 344.0 720.0C340.8 711.7 338.0 703.3 336.0 695.0C334.0 686.7 332.9 678.3 332.0 670.0C331.1 661.7 330.8 649.2 330.5 645.0Z"/>
<clipPath id="sil"><use href="#silp"/></clipPath>
<clipPath id="padc"><use href="#padp"/></clipPath>
</defs>
<rect x="271" y="84" width="1067" height="943" fill="#000"/>
<g filter="url(#pc)" fill="#fff" stroke="#fff">
<rect x="271" y="84" width="1067" height="943" fill="#000" stroke="none"/>
<use href="#silp" fill-opacity="0.19" stroke="none"/>
<g clip-path="url(#sil)" fill="none">
<use href="#silp" stroke-width="50" stroke-opacity="0.2" filter="url(#b8)"/>
<use href="#silp" stroke-width="14" stroke-opacity="0.22" filter="url(#b2)"/>
<use href="#silp" stroke-width="4" stroke-opacity="0.62" filter="url(#b1)"/>
<circle cx="1210" cy="428" r="52" fill="#fff" fill-opacity="0.3" stroke="none" filter="url(#b6)"/>
<path d="M1266.0 458.0C1264.0 462.5 1257.5 477.2 1254.0 485.0C1250.5 492.8 1247.5 497.5 1245.0 505.0C1242.5 512.5 1240.8 520.8 1239.0 530.0C1237.2 539.2 1235.2 550.8 1234.0 560.0C1232.8 569.2 1232.1 575.0 1231.5 585.0C1230.9 595.0 1230.7 614.2 1230.5 620.0" stroke-width="52" stroke-opacity="0.42" filter="url(#b6)"/>
</g>
<use href="#padp" fill-opacity="0.155" stroke="none"/>
<g clip-path="url(#padc)" fill="none">
<use href="#padp" stroke-width="26" stroke-opacity="0.14" filter="url(#b4)"/>
<path d="M982.0 566.0C981.7 567.9 982.0 569.3 980.0 577.5C978.0 585.7 973.8 603.3 970.0 615.0C966.2 626.7 961.2 638.3 957.5 647.5C953.8 656.7 950.4 663.8 947.5 670.0C944.6 676.2 941.2 682.5 940.0 685.0" stroke-width="3.6" stroke-opacity="0.75" filter="url(#b1)"/>
<path d="M982.0 566.0C981.7 567.9 982.0 569.3 980.0 577.5C978.0 585.7 973.8 603.3 970.0 615.0C966.2 626.7 961.2 638.3 957.5 647.5C953.8 656.7 950.4 663.8 947.5 670.0C944.6 676.2 941.2 682.5 940.0 685.0" stroke-width="12" stroke-opacity="0.2" filter="url(#b2)"/>
<path d="M979.0 563.0C975.2 563.1 966.0 572.2 957.0 578.0C948.0 583.8 934.5 591.5 925.0 598.0C915.5 604.5 902.2 612.0 900.0 617.0C897.8 622.0 906.2 624.5 912.0 628.0C917.8 631.5 927.7 634.8 935.0 638.0C942.3 641.2 950.2 650.8 956.0 647.0C961.8 643.2 966.0 626.6 970.0 615.0C974.0 603.4 978.5 586.2 980.0 577.5C981.5 568.8 982.8 562.9 979.0 563.0Z" fill="#fff" fill-opacity="0.36" stroke="none" filter="url(#b2)"/>
<path d="M977.0 565.0C973.7 567.2 965.7 572.5 957.0 578.0C948.3 583.5 934.5 591.5 925.0 598.0C915.5 604.5 904.2 613.8 900.0 617.0" stroke-width="2.4" stroke-opacity="0.4" filter="url(#b1)"/>
<path d="M393.0 700.0C392.8 704.7 391.0 721.0 392.0 728.0C393.0 735.0 394.6 736.5 399.0 742.0C403.4 747.5 408.9 755.2 418.6 761.0C428.3 766.8 440.9 772.8 457.0 777.0C473.1 781.2 495.7 784.4 515.0 786.5C534.3 788.6 553.7 789.5 573.0 789.5C592.3 789.5 611.7 788.3 631.0 786.5C650.3 784.7 669.4 781.6 688.6 778.7C707.9 775.8 727.3 772.9 746.5 769.0C765.7 765.1 787.9 760.1 804.0 755.6C820.1 751.1 833.3 745.9 843.0 742.0C852.7 738.1 855.8 731.9 862.0 732.4C868.2 732.9 872.8 740.6 880.0 745.0C887.2 749.4 903.8 753.9 905.0 758.5C906.2 763.1 894.2 766.8 887.0 772.5C879.8 778.2 870.3 786.7 862.0 792.5C853.7 798.3 845.3 802.9 837.0 807.5C828.7 812.1 820.3 816.2 812.0 820.0C803.7 823.8 795.3 827.1 787.0 830.0C778.7 832.9 770.3 835.2 762.0 837.5C753.7 839.8 745.3 842.1 737.0 844.0C728.7 845.9 720.3 847.6 712.0 849.0C703.7 850.4 695.3 851.5 687.0 852.5C678.7 853.5 670.3 854.2 662.0 855.0C653.7 855.8 649.4 856.7 637.0 857.5C624.6 858.3 602.0 859.8 587.5 860.0C573.0 860.2 562.5 859.8 550.0 859.0C537.5 858.2 525.0 856.9 512.5 855.0C500.0 853.1 486.2 850.8 475.0 847.5C463.8 844.2 450.0 837.1 445.0 835.0Z" fill="#000" fill-opacity="0.2" stroke="none" filter="url(#b2)"/>
<path d="M393.0 700.0C392.8 704.7 391.0 721.0 392.0 728.0C393.0 735.0 394.6 736.5 399.0 742.0C403.4 747.5 408.9 755.2 418.6 761.0C428.3 766.8 440.9 772.8 457.0 777.0C473.1 781.2 495.7 784.4 515.0 786.5C534.3 788.6 553.7 789.5 573.0 789.5C592.3 789.5 611.7 788.3 631.0 786.5C650.3 784.7 669.4 781.6 688.6 778.7C707.9 775.8 727.3 772.9 746.5 769.0C765.7 765.1 787.9 760.1 804.0 755.6C820.1 751.1 833.3 745.9 843.0 742.0C852.7 738.1 858.8 734.0 862.0 732.4" stroke-width="7" stroke-opacity="0.12" filter="url(#b1s)"/><path d="M393.0 700.0C392.8 704.7 391.0 721.0 392.0 728.0C393.0 735.0 394.6 736.5 399.0 742.0C403.4 747.5 408.9 755.2 418.6 761.0C428.3 766.8 440.9 772.8 457.0 777.0C473.1 781.2 495.7 784.4 515.0 786.5C534.3 788.6 553.7 789.5 573.0 789.5C592.3 789.5 611.7 788.3 631.0 786.5C650.3 784.7 669.4 781.6 688.6 778.7C707.9 775.8 727.3 772.9 746.5 769.0C765.7 765.1 787.9 760.1 804.0 755.6C820.1 751.1 833.3 745.9 843.0 742.0C852.7 738.1 858.8 734.0 862.0 732.4" stroke-width="2.6" stroke-opacity="0.5" filter="url(#b1)"/><path d="M405.0 575.0C404.4 579.2 402.2 589.8 401.5 600.0C400.8 610.2 401.2 624.3 400.5 636.0C399.8 647.7 398.2 659.3 397.0 670.0C395.8 680.7 393.8 690.3 393.0 700.0C392.2 709.7 392.2 723.3 392.0 728.0" stroke-width="3" stroke-opacity="0.16" filter="url(#b1s)"/>
<g filter="url(#b1s)">
<path d="M578.0 456.7C598.3 457.2 658.8 458.5 700.0 459.5C741.2 460.5 804.2 462.1 825.0 462.6" stroke="#000" stroke-width="5" stroke-opacity="0.3" transform="translate(0,5)"/>
<path d="M578.0 456.7C598.3 457.2 658.8 458.5 700.0 459.5C741.2 460.5 804.2 462.1 825.0 462.6" stroke-width="4.5" stroke-opacity="0.3"/>
<path d="M445.0 514.6C470.8 514.8 549.0 515.4 600.0 515.8C651.0 516.2 719.3 516.5 751.0 517.0C782.7 517.5 783.5 518.7 790.0 519.0" stroke="#000" stroke-width="5" stroke-opacity="0.3" transform="translate(0,5)"/>
<path d="M445.0 514.6C470.8 514.8 549.0 515.4 600.0 515.8C651.0 516.2 719.3 516.5 751.0 517.0C782.7 517.5 783.5 518.7 790.0 519.0" stroke-width="4.5" stroke-opacity="0.3"/>
<path d="M404.0 572.8C437.1 573.4 544.7 575.3 602.5 576.5C660.3 577.7 719.8 579.2 751.0 580.0C782.2 580.8 783.5 580.8 790.0 581.0" stroke="#000" stroke-width="5" stroke-opacity="0.3" transform="translate(0,5)"/>
<path d="M404.0 572.8C437.1 573.4 544.7 575.3 602.5 576.5C660.3 577.7 719.8 579.2 751.0 580.0C782.2 580.8 783.5 580.8 790.0 581.0" stroke-width="4.5" stroke-opacity="0.3"/>
<path d="M401.0 636.0C401.5 635.7 402.5 634.0 404.0 634.0C405.5 634.0 383.1 634.9 410.0 636.0C436.9 637.1 508.7 638.9 565.5 640.7C622.3 642.5 717.8 645.9 751.0 647.0C784.2 648.1 762.7 647.4 765.0 647.5" stroke="#000" stroke-width="5" stroke-opacity="0.3" transform="translate(0,5)"/>
<path d="M401.0 636.0C401.5 635.7 402.5 634.0 404.0 634.0C405.5 634.0 383.1 634.9 410.0 636.0C436.9 637.1 508.7 638.9 565.5 640.7C622.3 642.5 717.8 645.9 751.0 647.0C784.2 648.1 762.7 647.4 765.0 647.5" stroke-width="4.5" stroke-opacity="0.3"/>
<path d="M436.0 712.0C435.2 711.3 431.0 709.0 431.0 708.0C431.0 707.0 401.2 704.7 436.0 706.0C470.8 707.3 596.0 713.6 640.0 715.6C684.0 717.6 690.0 717.6 700.0 718.0" stroke="#000" stroke-width="5" stroke-opacity="0.3" transform="translate(0,5)"/>
<path d="M436.0 712.0C435.2 711.3 431.0 709.0 431.0 708.0C431.0 707.0 401.2 704.7 436.0 706.0C470.8 707.3 596.0 713.6 640.0 715.6C684.0 717.6 690.0 717.6 700.0 718.0" stroke-width="4.5" stroke-opacity="0.3"/>
</g>
<g filter="url(#b1)">
<path d="M578.0 456.7C598.3 457.2 658.8 458.5 700.0 459.5C741.2 460.5 804.2 462.1 825.0 462.6" stroke-width="1.8" stroke-opacity="0.48"/>
<path d="M445.0 514.6C470.8 514.8 549.0 515.4 600.0 515.8C651.0 516.2 719.3 516.5 751.0 517.0C782.7 517.5 783.5 518.7 790.0 519.0" stroke-width="1.8" stroke-opacity="0.48"/>
<path d="M404.0 572.8C437.1 573.4 544.7 575.3 602.5 576.5C660.3 577.7 719.8 579.2 751.0 580.0C782.2 580.8 783.5 580.8 790.0 581.0" stroke-width="1.8" stroke-opacity="0.48"/>
<path d="M401.0 636.0C401.5 635.7 402.5 634.0 404.0 634.0C405.5 634.0 383.1 634.9 410.0 636.0C436.9 637.1 508.7 638.9 565.5 640.7C622.3 642.5 717.8 645.9 751.0 647.0C784.2 648.1 762.7 647.4 765.0 647.5" stroke-width="1.8" stroke-opacity="0.48"/>
<path d="M436.0 712.0C435.2 711.3 431.0 709.0 431.0 708.0C431.0 707.0 401.2 704.7 436.0 706.0C470.8 707.3 596.0 713.6 640.0 715.6C684.0 717.6 690.0 717.6 700.0 718.0" stroke-width="1.8" stroke-opacity="0.48"/>
</g>
</g>
</g>
<g fill="none" font-family="Liberation Sans, sans-serif">
<line x1="378.5" y1="932.5" x2="368.5" y2="961" stroke="#f00" stroke-width="3"/>
<circle cx="368" cy="962" r="4.3" fill="#f00"/>
<line x1="378.5" y1="933" x2="378.5" y2="858" stroke="#00f" stroke-width="3"/>
<path d="M378.5 854.5l5 8.5h-10z" fill="#00f"/>
<line x1="377" y1="933" x2="455" y2="936" stroke="#0f0" stroke-width="3"/>
<path d="M462 936.3l-8.5-5v10z" fill="#0f0"/>
<text x="379.2" y="850.8" font-size="21.5" fill="#000" stroke="#00f" stroke-width="1">Z</text>
<text x="466.5" y="937.6" font-size="22" fill="#000" stroke="#0f0" stroke-width="1">Y</text>
<text x="369.5" y="967.6" font-size="20" fill="none" stroke="#f00" stroke-width="1" textLength="12" lengthAdjust="spacingAndGlyphs">X</text>
</g>
</svg>
</div>
</body>
</html>
